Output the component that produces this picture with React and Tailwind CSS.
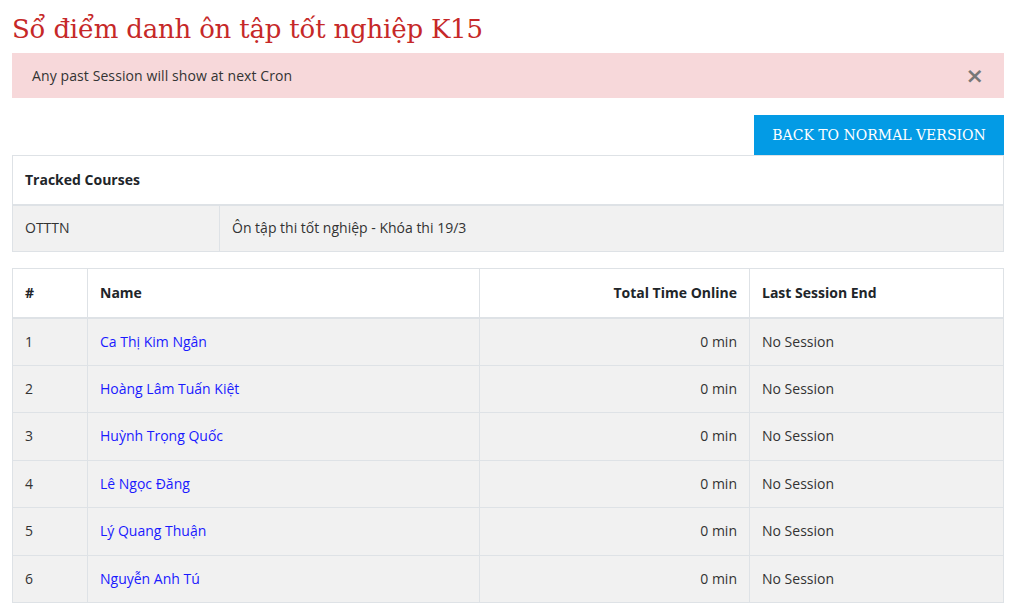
const students = [
  'Ca Thị Kim Ngân',
  'Hoàng Lâm Tuấn Kiệt',
  'Huỳnh Trọng Quốc',
  'Lê Ngọc Đăng',
  'Lý Quang Thuận',
  'Nguyễn Anh Tú',
];

const sans = "font-['Open_Sans',sans-serif]";
const slab = "font-['DejaVu_Serif',serif]";

export default function App() {
  return (
    <div className={`bg-white min-h-screen pl-3 pr-2 pt-[10px] text-[14px] text-[#333] ${sans}`}>
      {/* Title */}
      <h1 className={`${slab} text-[26px] leading-[38px] text-[#c62828] tracking-[-0.2px]`}>
        Sổ điểm danh ôn tập tốt nghiệp K15
      </h1>

      {/* Alert */}
      <div className="mt-[5px] h-[45px] bg-[#f7d8da] flex items-center justify-between pl-5 pr-5">
        <span className="text-[#333] tracking-[0.1px]">Any past Session will show at next Cron</span>
        <span className="text-[#777] text-[22px] font-bold leading-none font-['DejaVu_Sans',sans-serif]">×</span>
      </div>

      {/* Button */}
      <div className="flex justify-end mt-[17px]">
        <button className={`h-10 w-[250px] bg-[#039be5] text-white ${slab} text-[14px]`}>
          BACK TO NORMAL VERSION
        </button>
      </div>

      {/* Tracked courses */}
      <table className="w-full border-collapse border border-[#dee2e6] leading-[22px]">
        <thead>
          <tr className="bg-white">
            <th colSpan={2} className="text-left font-bold text-[#212529] px-3 h-[49px] border-b-2 border-[#dee2e6]">
              Tracked Courses
            </th>
          </tr>
        </thead>
        <tbody>
          <tr className="bg-[#f1f1f1]">
            <td className="w-[207px] px-3 h-[47px] border border-[#dee2e6]">OTTTN</td>
            <td className="px-3 h-[47px] border border-[#dee2e6]">Ôn tập thi tốt nghiệp - Khóa thi 19/3</td>
          </tr>
        </tbody>
      </table>

      {/* Students */}
      <table className="w-full border-collapse border border-[#dee2e6] leading-[22px] mt-4">
        <thead>
          <tr className="bg-white text-[#212529]">
            <th className="w-[75px] text-left font-bold px-3 h-[49px] border border-b-2 border-[#dee2e6]">#</th>
            <th className="w-[392px] text-left font-bold px-3 h-[49px] border border-b-2 border-[#dee2e6]">Name</th>
            <th className="w-[270px] text-right font-bold px-3 h-[49px] border border-b-2 border-[#dee2e6]">Total Time Online</th>
            <th className="text-left font-bold px-3 h-[49px] border border-b-2 border-[#dee2e6]">Last Session End</th>
          </tr>
        </thead>
        <tbody>
          {students.map((name, i) => (
            <tr key={name} className="bg-[#f1f1f1]">
              <td className="px-3 h-[47.5px] border border-[#dee2e6]">{i + 1}</td>
              <td className="px-3 h-[47.5px] border border-[#dee2e6]">
                <a href="#" className="text-[#1a1aff]">{name}</a>
              </td>
              <td className="px-3 h-[47.5px] border border-[#dee2e6] text-right">0 min</td>
              <td className="px-3 h-[47.5px] border border-[#dee2e6]">No Session</td>
            </tr>
          ))}
        </tbody>
      </table>
    </div>
  );
}
